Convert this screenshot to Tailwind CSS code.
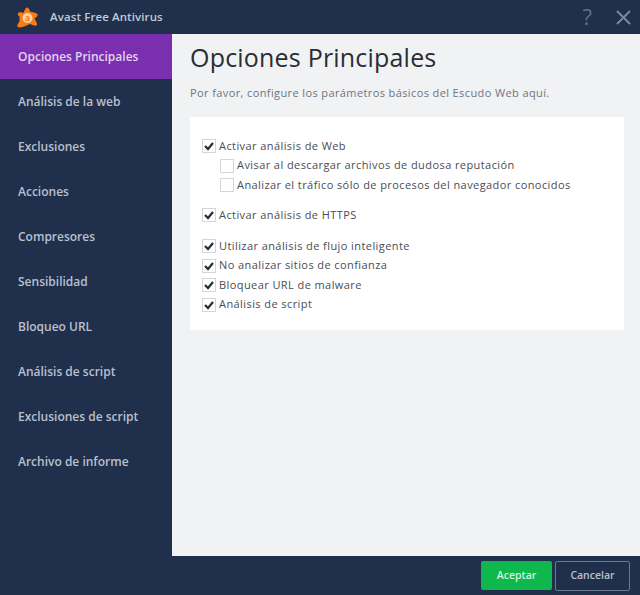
<!DOCTYPE html>
<html lang="en">
<head>
  <meta charset="UTF-8">
  <title>Avast Free Antivirus</title>
  <script src="https://cdn.jsdelivr.net/npm/@tailwindcss/browser@4"></script>
</head>
<body class="bg-[#202f4b] font-['Open_Sans','Liberation_Sans',sans-serif]">
<div class="w-[640px] h-[595px] flex flex-col overflow-hidden">

  <!-- title bar -->
  <header class="h-[34px] flex items-center shrink-0">
    <svg class="ml-[16px] w-[23px] h-[23px]" viewBox="0 0 23 23">
      <path d="M11 1.500 C12.500 1.500 13.500 3.500 14 5.500 C16.500 6 19 6.500 21.500 8 C22.500 9.500 20.500 11 18.500 12.500 C19 14.500 21.500 16.500 21 19 C19.500 20.500 16.500 19 14 18 C11 19 7 21.500 3 21.500 C0.500 21 1 18.500 3.500 15.500 C3.500 13.500 3.500 12 3.500 10.500 C2 9.500 1 8 2.500 6.500 C4.500 6 6.500 6.500 7.500 7 C8.500 5 9 2 11 1.500 Z" fill="#f47b16"/>
      <circle cx="11.500" cy="12" r="5" fill="#fcd3ae"/>
      <text x="11.500" y="15" text-anchor="middle" font-size="9" font-weight="700" fill="#f47b16" font-family="Open Sans">a</text>
    </svg>
    <span class="ml-[11px] text-[11.5px] font-semibold tracking-[0.1px] text-[#c3cad6]">Avast Free Antivirus</span>
    <div class="ml-auto flex items-center">
      <span class="text-[22px] leading-none text-[#5f6e8a] mr-[24px] mb-[2px]">?</span>
      <svg class="w-[15px] h-[15px] mr-[9px]" viewBox="0 0 15 15" fill="none" stroke="#7a879f" stroke-width="2"><path d="M1 1 L14 14 M14 1 L1 14"/></svg>
    </div>
  </header>

  <div class="flex flex-1 min-h-0">
    <!-- sidebar -->
    <nav class="w-[172px] shrink-0 text-[12px] font-semibold text-[#b8c0ce]">
      <a class="flex items-center h-[45px] pl-[18px] bg-[#7a2fb0] text-[#e2d3ee]">Opciones Principales</a>
      <a class="flex items-center h-[45px] pl-[18px]">Análisis de la web</a>
      <a class="flex items-center h-[45px] pl-[18px]">Exclusiones</a>
      <a class="flex items-center h-[45px] pl-[18px]">Acciones</a>
      <a class="flex items-center h-[45px] pl-[18px]">Compresores</a>
      <a class="flex items-center h-[45px] pl-[18px]">Sensibilidad</a>
      <a class="flex items-center h-[45px] pl-[18px]">Bloqueo URL</a>
      <a class="flex items-center h-[45px] pl-[18px]">Análisis de script</a>
      <a class="flex items-center h-[45px] pl-[18px]">Exclusiones de script</a>
      <a class="flex items-center h-[45px] pl-[18px]">Archivo de informe</a>
    </nav>

    <!-- main panel -->
    <main class="flex-1 bg-[#f1f2f4] pl-[18px] pr-[16px] pt-[6px]">
      <h1 class="text-[25px] leading-[34px] text-[#2a2d33] tracking-[0.2px]">Opciones Principales</h1>
      <p class="mt-[11px] text-[11px] leading-[16px] text-[#6f7480] tracking-[0.39px]">Por favor, configure los parámetros básicos del Escudo Web aquí.</p>

      <section class="mt-[16px] bg-white h-[213px] pl-[12px] pt-[19px] text-[11px] text-[#4a4d55] tracking-[0.42px]">
        <label class="flex items-center h-[20px] gap-[3px]">
          <span class="w-[14px] h-[14px] border border-[#d5d6d9] flex items-center justify-center"><svg class="w-[10px] h-[10px]" viewBox="0 0 10 10" fill="none" stroke="#2a2d33" stroke-width="2.200"><path d="M1 5 L4 8 L9 2"/></svg></span>
          Activar análisis de Web
        </label>
        <label class="flex items-center h-[19px] gap-[3px] pl-[18px]">
          <span class="w-[14px] h-[14px] border border-[#d5d6d9]"></span>
          Avisar al descargar archivos de dudosa reputación
        </label>
        <label class="flex items-center h-[20px] gap-[3px] pl-[18px]">
          <span class="w-[14px] h-[14px] border border-[#d5d6d9]"></span>
          Analizar el tráfico sólo de procesos del navegador conocidos
        </label>
        <label class="flex items-center h-[20px] gap-[3px] mt-[10px]">
          <span class="w-[14px] h-[14px] border border-[#d5d6d9] flex items-center justify-center"><svg class="w-[10px] h-[10px]" viewBox="0 0 10 10" fill="none" stroke="#2a2d33" stroke-width="2.200"><path d="M1 5 L4 8 L9 2"/></svg></span>
          Activar análisis de HTTPS
        </label>
        <label class="flex items-center h-[20px] gap-[3px] mt-[11px]">
          <span class="w-[14px] h-[14px] border border-[#d5d6d9] flex items-center justify-center"><svg class="w-[10px] h-[10px]" viewBox="0 0 10 10" fill="none" stroke="#2a2d33" stroke-width="2.200"><path d="M1 5 L4 8 L9 2"/></svg></span>
          Utilizar análisis de flujo inteligente
        </label>
        <label class="flex items-center h-[19px] gap-[3px]">
          <span class="w-[14px] h-[14px] border border-[#d5d6d9] flex items-center justify-center"><svg class="w-[10px] h-[10px]" viewBox="0 0 10 10" fill="none" stroke="#2a2d33" stroke-width="2.200"><path d="M1 5 L4 8 L9 2"/></svg></span>
          No analizar sitios de confianza
        </label>
        <label class="flex items-center h-[20px] gap-[3px]">
          <span class="w-[14px] h-[14px] border border-[#d5d6d9] flex items-center justify-center"><svg class="w-[10px] h-[10px]" viewBox="0 0 10 10" fill="none" stroke="#2a2d33" stroke-width="2.200"><path d="M1 5 L4 8 L9 2"/></svg></span>
          Bloquear URL de malware
        </label>
        <label class="flex items-center h-[19px] gap-[3px]">
          <span class="w-[14px] h-[14px] border border-[#d5d6d9] flex items-center justify-center"><svg class="w-[10px] h-[10px]" viewBox="0 0 10 10" fill="none" stroke="#2a2d33" stroke-width="2.200"><path d="M1 5 L4 8 L9 2"/></svg></span>
          Análisis de script
        </label>
      </section>
    </main>
  </div>

  <!-- footer -->
  <footer class="h-[39px] shrink-0 flex items-center justify-end gap-[3px] pr-[10px] text-[10.5px] font-semibold">
    <button class="w-[71px] h-[29px] rounded-[2px] bg-[#0fb84d] text-[#d5f3df]">Aceptar</button>
    <button class="w-[75px] h-[30px] rounded-[2px] border border-[#6b7890] text-[#b8c0ce]">Cancelar</button>
  </footer>
</div>
</body>
</html>
